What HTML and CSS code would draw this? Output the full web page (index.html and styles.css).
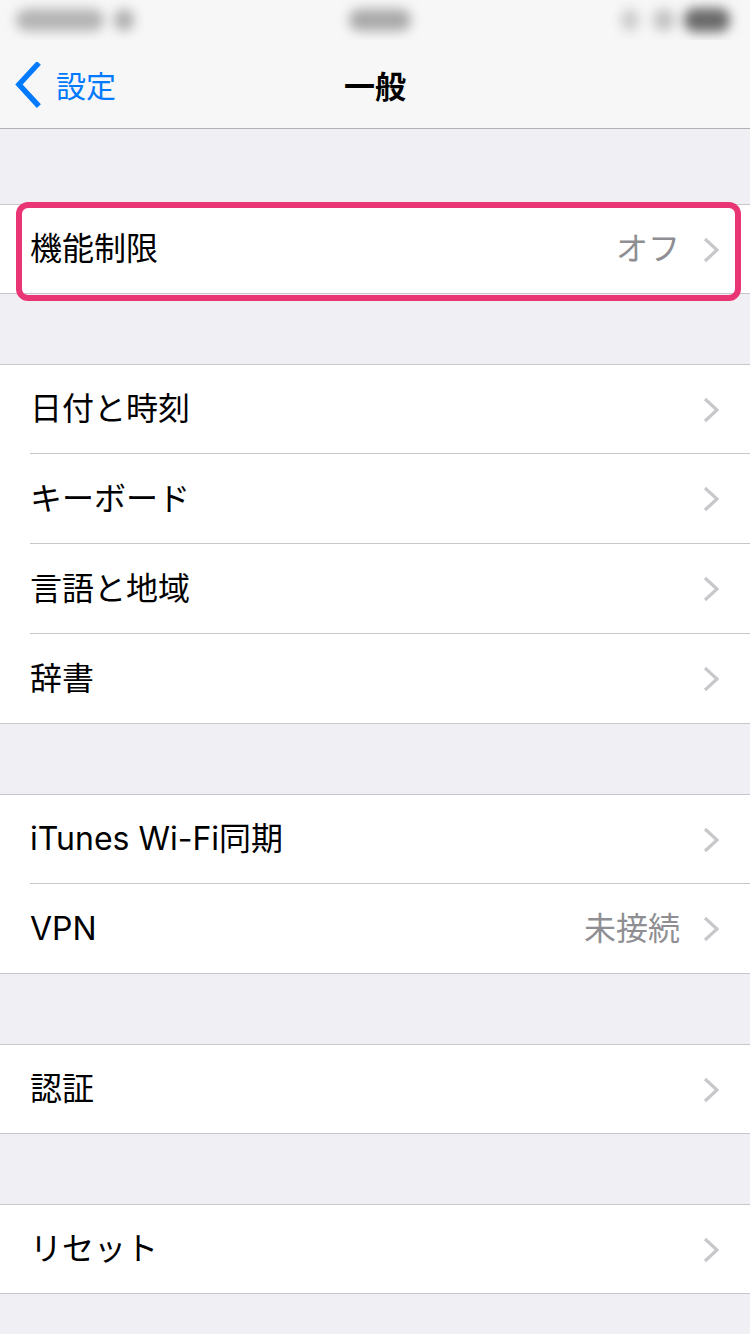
FILE: index.html
```html
<!DOCTYPE html>
<html lang="ja">
<head>
<meta charset="utf-8">
<title>一般</title>
<link rel="stylesheet" href="styles.css">
</head>
<body>
<div class="screen">
  <header class="header">
    <div class="status">
      <span class="blob blob-carrier"></span>
      <span class="blob blob-wifi"></span>
      <span class="blob blob-time"></span>
      <span class="blob blob-r1"></span>
      <span class="blob blob-r2"></span>
      <span class="blob blob-battery"></span>
    </div>
    <nav class="nav">
      <div class="nav-left">
        <svg class="back-icon" width="30" height="46" viewBox="0 0 30 46">
          <polyline points="23,3 5,22.5 23,42" fill="none" stroke="#007aff" stroke-width="5.5" stroke-linecap="square" stroke-linejoin="miter"/>
        </svg>
        <span class="back-text">設定</span>
      </div>
      <div class="nav-title">一般</div>
      <div class="nav-right"></div>
    </nav>
  </header>

  <main class="content">
    <section class="group group-first">
      <div class="row">
        <span class="label">機能制限</span>
        <span class="value">オフ</span>
        <svg class="chev" width="18" height="26" viewBox="0 0 18 26"><polyline points="3,2 15,13 3,24" fill="none" stroke="#c7c7cc" stroke-width="3.2"/></svg>
        <span class="highlight"></span>
      </div>
    </section>

    <section class="group">
      <div class="row"><span class="label">日付と時刻</span><svg class="chev" width="18" height="26" viewBox="0 0 18 26"><polyline points="3,2 15,13 3,24" fill="none" stroke="#c7c7cc" stroke-width="3.2"/></svg></div>
      <div class="row"><span class="label">キーボード</span><svg class="chev" width="18" height="26" viewBox="0 0 18 26"><polyline points="3,2 15,13 3,24" fill="none" stroke="#c7c7cc" stroke-width="3.2"/></svg></div>
      <div class="row"><span class="label">言語と地域</span><svg class="chev" width="18" height="26" viewBox="0 0 18 26"><polyline points="3,2 15,13 3,24" fill="none" stroke="#c7c7cc" stroke-width="3.2"/></svg></div>
      <div class="row"><span class="label">辞書</span><svg class="chev" width="18" height="26" viewBox="0 0 18 26"><polyline points="3,2 15,13 3,24" fill="none" stroke="#c7c7cc" stroke-width="3.2"/></svg></div>
    </section>

    <section class="group">
      <div class="row"><span class="label">iTunes Wi-Fi同期</span><svg class="chev" width="18" height="26" viewBox="0 0 18 26"><polyline points="3,2 15,13 3,24" fill="none" stroke="#c7c7cc" stroke-width="3.2"/></svg></div>
      <div class="row"><span class="label">VPN</span><span class="value">未接続</span><svg class="chev" width="18" height="26" viewBox="0 0 18 26"><polyline points="3,2 15,13 3,24" fill="none" stroke="#c7c7cc" stroke-width="3.2"/></svg></div>
    </section>

    <section class="group">
      <div class="row"><span class="label">認証</span><svg class="chev" width="18" height="26" viewBox="0 0 18 26"><polyline points="3,2 15,13 3,24" fill="none" stroke="#c7c7cc" stroke-width="3.2"/></svg></div>
    </section>

    <section class="group">
      <div class="row"><span class="label">リセット</span><svg class="chev" width="18" height="26" viewBox="0 0 18 26"><polyline points="3,2 15,13 3,24" fill="none" stroke="#c7c7cc" stroke-width="3.2"/></svg></div>
    </section>
  </main>
</div>
</body>
</html>
```

FILE: styles.css
```css
* { box-sizing: border-box; }
html, body {
  margin: 0;
  padding: 0;
}
body {
  width: 750px;
  height: 1334px;
  overflow: hidden;
  background: #efeff4;
  font-family: Inter, "Noto Sans CJK JP", sans-serif;
  color: #000;
}
.screen {
  display: flex;
  flex-direction: column;
}
.header {
  background: #f7f7f7;
  border-bottom: 1px solid #b2b2b2;
}
.status {
  height: 40px;
  display: flex;
  align-items: center;
  padding-left: 16px;
  overflow: hidden;
}
.blob {
  display: block;
  height: 22px;
  border-radius: 11px;
  filter: blur(6px);
}
.blob-carrier { width: 88px; background: #b3b3b3; }
.blob-wifi { width: 20px; margin-left: 10px; background: #adadad; }
.blob-time { width: 62px; margin-left: 215px; background: #a9a9a9; }
.blob-r1 { width: 18px; margin-left: 210px; background: #cbcbcb; }
.blob-r2 { width: 22px; margin-left: 14px; background: #c2c2c2; }
.blob-battery { width: 46px; margin-left: 9px; height: 24px; background: #6a6a6a; }

.nav {
  height: 88px;
  display: grid;
  grid-template-columns: 1fr auto 1fr;
  align-items: center;
}
.nav-left {
  display: flex;
  align-items: center;
  padding-left: 14px;
  color: #007aff;
}
.back-icon { display: block; margin-top: 1px; }
.back-text {
  font-family: "Noto Sans CJK JP", sans-serif;
  font-size: 30px;
  margin-left: 12px;
  line-height: 1;
}
.nav-title {
  font-family: "Noto Sans CJK JP", sans-serif;
  font-size: 31px;
  font-weight: 700;
  line-height: 1;
}

.content {
  display: flex;
  flex-direction: column;
  gap: 70px;
  padding-top: 75px;
}
.group {
  background: #fff;
  border-top: 1px solid #c8c7cc;
  border-bottom: 1px solid #c8c7cc;
  display: flex;
  flex-direction: column;
}
.group-first { position: relative; }
.row {
  height: 90px;
  margin-left: 30px;
  padding-right: 30px;
  display: flex;
  align-items: center;
  border-bottom: 1px solid #c8c7cc;
}
.row:first-child { height: 89px; }
.row:last-child {
  height: 89px;
  border-bottom: none;
}
.row:first-child:last-child { height: 88px; }
.label {
  font-size: 32px;
  flex: 1;
  line-height: 1;
}
.value {
  font-size: 32px;
  color: #8e8e93;
  margin-right: 22px;
  line-height: 1;
}
.chev { display: block; flex: none; margin-top: 1px; }

.highlight {
  position: absolute;
  left: 16px;
  top: -3px;
  width: 725px;
  height: 99px;
  border: 6px solid #ea3574;
  border-radius: 12px;
  pointer-events: none;
}
```
